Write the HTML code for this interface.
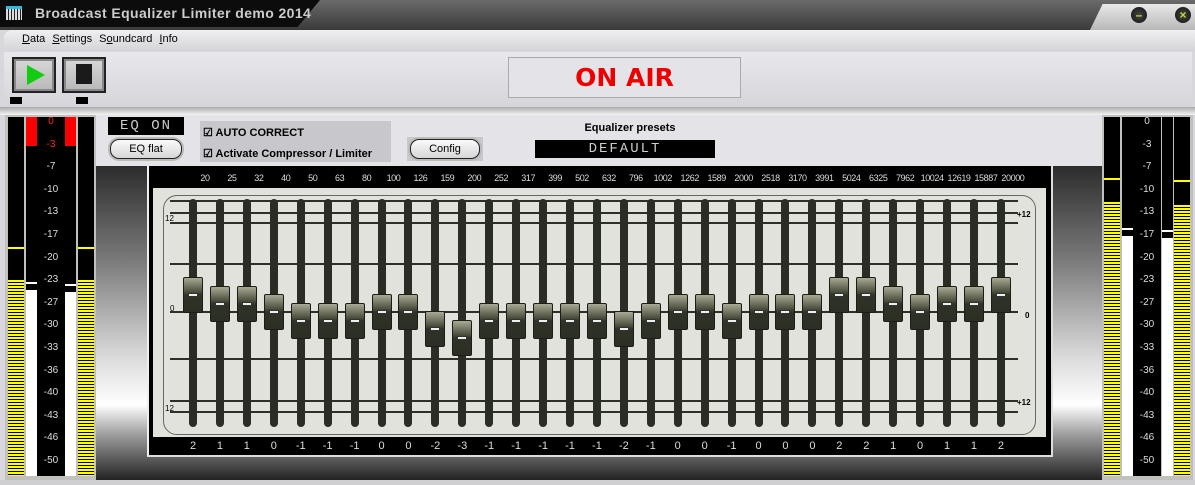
<!DOCTYPE html>
<html><head><meta charset="utf-8"><style>
*{margin:0;padding:0;box-sizing:border-box}
body{width:1195px;height:485px;overflow:hidden;background:#d8d8dc;font-family:"Liberation Sans",sans-serif;position:relative}
.a{position:absolute}
.lcd{background:#000;color:#ccc;font-family:"Liberation Mono",monospace;letter-spacing:2px;text-align:center}
.btn{background:linear-gradient(#fafafa,#d6d6d6);border:1px solid #222;border-radius:9px;font-size:11px;text-align:center;line-height:18px;box-shadow:0 0 0 2px #bbb}
.ys{background:repeating-linear-gradient(#ff0 0 2px,#000 2px 3px)}
</style></head><body>
<div class="a" style="left:0;top:0;width:1195px;height:30px;background:linear-gradient(#6a6a6a,#3a3a3a)"></div>
<div class="a" style="left:0;top:0;width:320px;height:27px;background:#0c0c0c;clip-path:polygon(0 0,100% 0,93% 100%,0 100%)"></div>
<div class="a" style="left:6px;top:6px;width:16px;height:14px;background:repeating-linear-gradient(90deg,#ddd 0 2px,#222 2px 3px);border-top:3px solid #3bd"></div>
<div class="a" style="left:35px;top:5px;color:#ccc;font-weight:bold;font-size:14px;letter-spacing:.4px">Broadcast Equalizer Limiter demo 2014</div>
<div class="a" style="left:1090px;top:4px;width:105px;height:26px;background:linear-gradient(#e8e8e8,#b8b8b8);clip-path:polygon(12% 0,100% 0,100% 100%,0 100%)"></div>
<div class="a" style="left:1131px;top:7px;width:16px;height:16px;border-radius:50%;background:radial-gradient(#444,#111);color:#bd3;font-size:12px;line-height:16px;text-align:center;font-weight:bold">–</div>
<div class="a" style="left:1175px;top:7px;width:16px;height:16px;border-radius:50%;background:radial-gradient(#444,#111);color:#bd3;font-size:12px;line-height:16px;text-align:center;font-weight:bold">×</div>
<div class="a" style="left:4px;top:30px;width:1191px;height:21px;background:linear-gradient(#f0f0f2,#d4d4d8);border-radius:8px 0 0 8px"></div>
<div class="a" style="left:22px;top:33px;font-size:11px;color:#000;word-spacing:4px"><u>D</u>ata <u>S</u>ettings S<u>o</u>undcard <u>I</u>nfo</div>
<div class="a" style="left:4px;top:52px;width:1188px;height:55px;background:linear-gradient(#e8e8ec,#d6d6da)"></div>
<div class="a" style="left:0;top:107px;width:1195px;height:8px;background:linear-gradient(#aaa,#f4f4f4)"></div>
<div class="a" style="left:12px;top:57px;width:44px;height:36px;background:linear-gradient(#d8d8d8,#b8b8b8);border:2px solid #222;box-shadow:inset 0 0 0 2px #888"></div>
<div class="a" style="left:27px;top:65px;width:0;height:0;border-left:18px solid #1c1;border-top:10px solid transparent;border-bottom:10px solid transparent"></div>
<div class="a" style="left:62px;top:57px;width:44px;height:36px;background:linear-gradient(#d8d8d8,#b8b8b8);border:2px solid #222;box-shadow:inset 0 0 0 2px #888"></div>
<div class="a" style="left:76px;top:64px;width:16px;height:20px;background:#1a1a1a"></div>
<div class="a" style="left:10px;top:97px;width:12px;height:7px;background:#000"></div>
<div class="a" style="left:76px;top:97px;width:12px;height:7px;background:#000"></div>
<div class="a" style="left:508px;top:57px;width:233px;height:41px;background:#e4e4e8;border:1px solid #aaa;color:#e00;font-weight:900;font-size:25px;text-align:center;line-height:40px;font-family:'DejaVu Sans',sans-serif">ON AIR</div>
<div class="a" style="left:95px;top:115px;width:1007px;height:51px;background:#e4e4e8"></div>
<div class="a lcd" style="left:108px;top:117px;width:76px;height:18px;font-size:14px;line-height:18px">EQ ON</div>
<div class="a btn" style="left:110px;top:139px;width:72px;height:20px">EQ flat</div>
<div class="a" style="left:200px;top:121px;width:191px;height:41px;background:#c8c8cc"></div>
<div class="a" style="left:203px;top:123px;font-size:11px;font-weight:bold;line-height:21px">☑ AUTO CORRECT<br>☑ Activate Compressor / Limiter</div>
<div class="a" style="left:407px;top:137px;width:76px;height:24px;background:#c8c8cc"></div>
<div class="a btn" style="left:410px;top:139px;width:70px;height:20px">Config</div>
<div class="a" style="left:560px;top:122px;width:140px;text-align:center;font-size:11px;font-weight:bold">Equalizer presets</div>
<div class="a lcd" style="left:535px;top:140px;width:180px;height:18px;font-size:14px;line-height:18px">DEFAULT</div>
<div class="a" style="left:95px;top:166px;width:1007px;height:314px;background:linear-gradient(#2c2c2c 0%,#7a7a7a 30%,#d8d8d8 60%,#fff 76%,#999 86%,#222 100%)"></div>
<div class="a" style="left:0;top:480px;width:1195px;height:5px;background:#cfcfd2"></div>
<div class="a" style="left:5px;top:115px;width:91px;height:365px;background:#c0c0bc"></div>
<div class="a" style="left:1102px;top:115px;width:91px;height:365px;background:#c0c0bc"></div>
<div class="a" style="left:147px;top:166px;width:906px;height:291px;background:#000;border:2px solid #ddd;border-top:none;border-left-color:#eee"></div>
<div class="a" style="left:153px;top:188px;width:893px;height:249px;background:#e2e2dc"></div>
<div class="a" style="left:163px;top:195px;width:873px;height:240px;border:1px solid #666;border-radius:14px"></div>
<div id="eq"></div>
<script>
var h='';
function d(s){h+='<div class="a" style="'+s+'"></div>';}
function t(s,x){h+='<div class="a" style="'+s+'">'+x+'</div>';}
[200,212,222,263,311,358,400,411].forEach(function(y){d('left:170px;top:'+y+'px;width:848px;height:2px;background:#2e3028');});
t('left:165px;top:214px;font-size:8px','12');t('left:170px;top:304px;font-size:8px','0');t('left:165px;top:404px;font-size:8px','12');
t('left:1017px;top:210px;font-size:8px;font-weight:bold','+12');t('left:1025px;top:311px;font-size:8px;font-weight:bold','0');t('left:1017px;top:398px;font-size:8px;font-weight:bold','+12');
var f=[20,25,32,40,50,63,80,100,126,159,200,252,317,399,502,632,796,1002,1262,1589,2000,2518,3170,3991,5024,6325,7962,10024,12619,15887,20000];
var v=[2,1,1,0,-1,-1,-1,0,0,-2,-3,-1,-1,-1,-1,-1,-2,-1,0,0,-1,0,0,0,2,2,1,0,1,1,2];
for(var i=0;i<31;i++){var c=193+i*26.93;
t('left:'+(c-8)+'px;top:173px;width:40px;text-align:center;color:#ddd;font-size:9px;letter-spacing:-0.4px',f[i]);
t('left:'+(c-18)+'px;top:440px;width:36px;text-align:center;color:#ddd;font-size:11px',v[i]);
d('left:'+(c-4)+'px;top:199px;width:8px;height:228px;border-radius:4px;background:#2a2d24');
var y=294-v[i]*8.5;
d('left:'+(c-10)+'px;top:'+y+'px;width:20px;height:36px;border-radius:2px;background:linear-gradient(#a9aa94,#4c503f 40%,#2f3327 50%,#2b2f24);border:1px solid #1c1e16');
d('left:'+(c-5)+'px;top:'+(y+16)+'px;width:10px;height:4px;background:#eee;border:1px solid #333');}
function ym(x,top,line){d('left:'+x+'px;top:117px;width:16px;height:359px;background:#000');d('left:'+x+'px;top:'+line+'px;width:16px;height:2px;background:#ff0');h+='<div class="a ys" style="left:'+x+'px;top:'+top+'px;width:16px;height:'+(476-top)+'px"></div>';}
function wm(x,top,red){d('left:'+x+'px;top:117px;width:11px;height:359px;background:#000');d('left:'+x+'px;top:'+top+'px;width:11px;height:'+(476-top)+'px;background:#fff');d('left:'+x+'px;top:'+(top-8)+'px;width:11px;height:2px;background:#fff');if(red)d('left:'+x+'px;top:117px;width:11px;height:29px;background:#f00');}
function sc(x,red){d('left:'+x+'px;top:117px;width:28px;height:359px;background:#000');var L=['0','-3','-7','-10','-13','-17','-20','-23','-27','-30','-33','-36','-40','-43','-46','-50'];for(var k=0;k<16;k++)t('left:'+x+'px;top:'+(116+k*22.6)+'px;width:28px;text-align:center;font-size:10px;color:'+(red&&k<2?'#f22':'#ddd'),L[k]);}
ym(8,280,247);wm(26,290,1);sc(37,1);wm(65,292,1);ym(78,280,247);
ym(1104,202,178);wm(1122,236,0);sc(1133,0);wm(1162,238,0);ym(1174,205,180);
document.getElementById('eq').outerHTML=h;
</script>
</body></html>
